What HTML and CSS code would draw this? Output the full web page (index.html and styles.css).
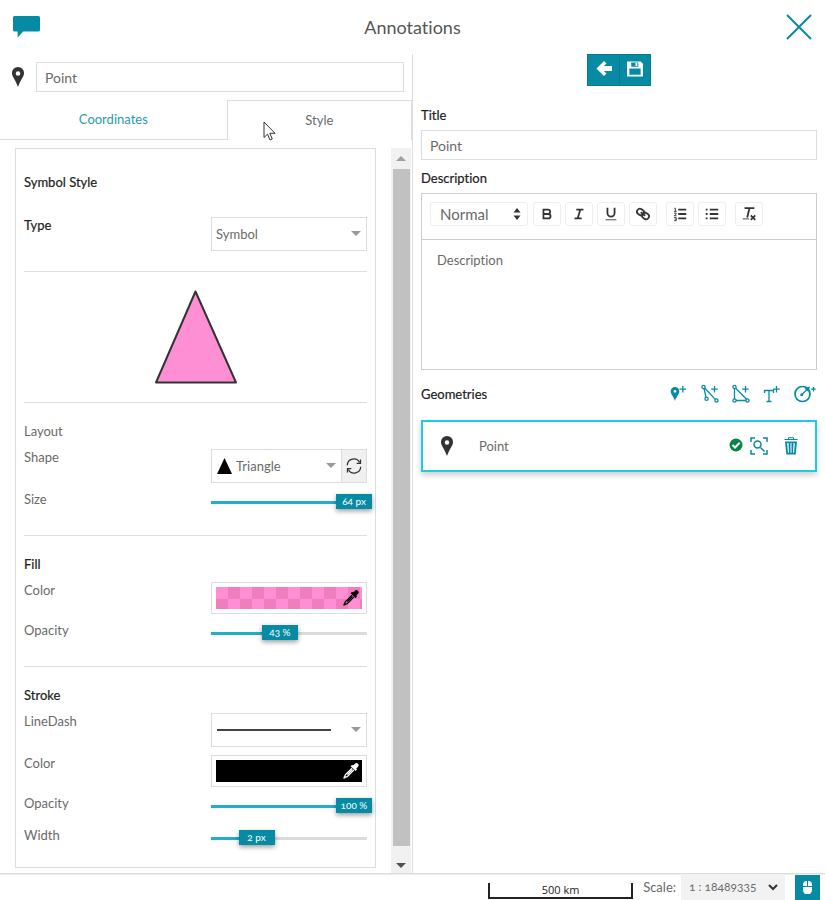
FILE: index.html
```html
<!DOCTYPE html>
<html lang="en">
<head>
<meta charset="utf-8">
<meta name="viewport" content="width=device-width, initial-scale=1">
<title>Annotations</title>
<link rel="stylesheet" href="styles.css">
</head>
<body>
<svg class="defs" aria-hidden="true">
  <symbol id="pin" viewBox="0 0 12 20"><path fill-rule="evenodd" d="M6 0a6 6 0 0 0-6 6.200c0 3.400 3.700 7 6 13.800 2.300-6.800 6-10.400 6-13.800A6 6 0 0 0 6 0zm0 4.200a2.300 2.300 0 1 1 0 4.600 2.300 2.300 0 0 1 0-4.600z"/></symbol>
  <symbol id="dropper" viewBox="0 0 16 16"><path d="M10 2.500 11.800 .900a2.100 2.100 0 0 1 3.200 2.900L13.300 5.600l.7.900-1.500 1.500L7.600 3.300 9.200 1.700z"/><path fill="none" stroke="currentColor" stroke-width="1.300" d="M9 5.200 2.300 11.800 1.400 14.500 4.200 13.600 10.800 7"/><path d="M.7 13.400 2.600 15.300 .6 15.600zM9.900 6.800 4.800 11.900 3.900 11 9 5.900z"/></symbol>
</svg>
<header class="topbar">
  <svg class="comment" viewBox="0 0 27 22" aria-hidden="true"><path d="M1.500 0h24A1.500 1.500 0 0 1 27 1.500v12.400a1.500 1.500 0 0 1-1.500 1.500H10.200L4.600 21.600V15.400H1.500A1.500 1.500 0 0 1 0 13.900V1.500A1.500 1.500 0 0 1 1.500 0z"/></svg>
  <h1>Annotations</h1>
  <button class="close" aria-label="Close"><svg viewBox="0 0 26 26"><path d="M1 1 25 25M25 1 1 25"/></svg></button>
</header>
<main class="panels">
  <section class="left">
    <div class="namebar">
      <svg class="pin"><use href="#pin"/></svg>
      <input class="text" type="text" value="Point" aria-label="Geometry name">
    </div>
    <nav class="tabs">
      <a href="#coordinates">Coordinates</a>
      <a href="#style" class="active">Style</a>
    </nav>
    <svg class="pointer" viewBox="0 0 13 20" aria-hidden="true"><path d="M1 1v15.500l3.500-3.400 2.500 5.900 2.300-1-2.500-5.700H12z"/></svg>
    <div class="scroller">
      <form class="card">
        <section class="group first">
          <h2>Symbol Style</h2>
          <div class="row">
            <label class="strong" for="type">Type</label>
            <div class="pick"><select id="type"><option>Symbol</option></select></div>
          </div>
        </section>
        <div class="preview">
          <svg viewBox="0 0 82 94" aria-hidden="true"><path d="M40.500 1.500 81 92.500H1z"/></svg>
        </div>
        <section class="group">
          <h3 class="plain">Layout</h3>
          <div class="row">
            <label for="shape">Shape</label>
            <div class="combo">
              <div class="pick shape"><svg viewBox="0 0 15 16" aria-hidden="true"><path d="M7.500 0 15 16H0z"/></svg><select id="shape"><option>Triangle</option></select></div>
              <button type="button" class="refresh" aria-label="Refresh symbols"><svg viewBox="0 0 16 16"><path d="M1.300 7.200A6.500 6.500 0 0 1 13.600 4.500M14.700 8.800A6.500 6.500 0 0 1 2.400 11.500"/><path d="M14.500 1.500V5.300H10.700M1.500 14.500V10.700H5.300"/></svg></button>
            </div>
          </div>
          <div class="row">
            <label for="size">Size</label>
            <div class="slider" style="--p:1"><input id="size" type="range" min="0" max="64" value="64"><output for="size">64 px</output></div>
          </div>
        </section>
        <section class="group">
          <h3>Fill</h3>
          <div class="row">
            <label for="fill">Color</label>
            <button type="button" id="fill" class="color"><span class="swatch pink"><svg><use href="#dropper"/></svg></span></button>
          </div>
          <div class="row">
            <label for="fo">Opacity</label>
            <div class="slider" style="--p:.43"><input id="fo" type="range" value="43"><output for="fo">43 %</output></div>
          </div>
        </section>
        <section class="group">
          <h3>Stroke</h3>
          <div class="row">
            <label for="dash">LineDash</label>
            <button type="button" id="dash" class="pick dash" aria-haspopup="listbox"><span></span></button>
          </div>
          <div class="row">
            <label for="stroke">Color</label>
            <button type="button" id="stroke" class="color"><span class="swatch black"><svg><use href="#dropper"/></svg></span></button>
          </div>
          <div class="row">
            <label for="so">Opacity</label>
            <div class="slider" style="--p:1"><input id="so" type="range" value="100"><output for="so">100 %</output></div>
          </div>
          <div class="row">
            <label for="width">Width</label>
            <div class="slider" style="--p:.25"><input id="width" type="range" min="0" max="8" value="2"><output for="width">2 px</output></div>
          </div>
        </section>
      </form>
      <div class="scrollbar" aria-hidden="true"><i class="up"></i><i class="thumb"></i><i class="down"></i></div>
    </div>
  </section>
  <section class="right">
    <div class="actions">
      <button aria-label="Back"><svg viewBox="0 0 16 16"><path d="M8 0 .5 7.500 8 15l2.500-2.500-2.600-2.600H16V5.100H7.900l2.600-2.600z"/></svg></button>
      <button aria-label="Save"><svg viewBox="0 0 17 16"><path fill-rule="evenodd" d="M0 0h14.500L17 2.500V16H0zM4.500 1v4.500h7.500V1zM2.500 7.500V14h12V7.500z"/><path d="M9 1.500h2v3.300H9z"/></svg></button>
    </div>
    <label class="strong" for="title">Title</label>
    <input class="text" id="title" type="text" value="Point">
    <label class="strong" for="desc">Description</label>
    <div class="editor">
      <div class="tools">
        <div class="format"><select aria-label="Text format"><option>Normal</option></select><svg viewBox="0 0 8 12" aria-hidden="true"><path d="M4 0 7.500 4.500H.5zM4 12 .5 7.500h7z"/></svg></div>
        <button aria-label="Bold"><svg viewBox="0 0 18 18"><path d="M5 4h5a2.500 2.500 0 0 1 0 5H5zM5 9h5.500a2.500 2.500 0 0 1 0 5H5z"/></svg></button>
        <button aria-label="Italic"><svg viewBox="0 0 18 18"><path d="M6 4h8M4 14h8M10.500 4 7.500 14"/></svg></button>
        <button aria-label="Underline"><svg viewBox="0 0 18 18"><path d="M5 2V8a4 4 0 0 0 8 0V2"/><path class="thin" d="M3 15.500h12"/></svg></button>
        <button aria-label="Link"><svg viewBox="0 0 18 18"><rect x="2" y="3.500" width="8" height="6.500" rx="3.200" transform="rotate(35 6 7)"/><rect x="8" y="8" width="8" height="6.500" rx="3.200" transform="rotate(35 12 11)"/><path d="M6.500 7 11.500 11"/></svg></button>
        <button class="gap" aria-label="Numbered list"><svg viewBox="0 0 18 18"><path d="M7 4h9M7 9h9M7 14h9"/><path class="thin" d="M2.500 2.500H3.800V6M2.300 6h3M2.300 8h2.400v1L2.500 11h2.700M2.300 13h2.500v3.500H2.300M3 14.700h1.800"/></svg></button>
        <button aria-label="Bulleted list"><svg viewBox="0 0 18 18"><path d="M6.500 4H16M6.500 9H16M6.500 14H16M2 4H4M2 9H4M2 14H4"/></svg></button>
        <button class="gap" aria-label="Clear formatting"><svg viewBox="0 0 18 18"><path d="M4 2.500h11M9.500 2.500 7 13M11 10.500l5 5M16 10.500l-5 5"/><path class="thin" d="M2 14.500h7"/></svg></button>
      </div>
      <textarea id="desc" placeholder="Description"></textarea>
    </div>
    <div class="geohead">
      <h2>Geometries</h2>
      <div class="adders">
        <button aria-label="Add point"><svg viewBox="0 0 20 20"><path class="solid" fill-rule="evenodd" d="M6 3a4.300 4.300 0 0 0-4.300 4.500C1.700 10.300 4.600 12.300 6 17c1.400-4.700 4.300-6.700 4.300-9.500A4.300 4.300 0 0 0 6 3zm0 2.900a1.400 1.400 0 1 1 0 2.800 1.400 1.400 0 0 1 0-2.800z"/><path d="M13.800 2v6.500M10.500 5.200h6.500"/></svg></button>
        <button aria-label="Add line"><svg viewBox="0 0 20 20"><path d="M4 4.500 6 13.300M4.900 4.300 15.500 15.600M14.500 2v6.500M11.200 5.200h6.500"/><circle cx="3.500" cy="3" r="1.600"/><circle cx="6.500" cy="14.800" r="1.600"/><circle cx="16.500" cy="16.500" r="1.600"/></svg></button>
        <button aria-label="Add polygon"><svg viewBox="0 0 20 20"><path d="M3.500 5v10M5 16.500h10M4.700 4.300 15.500 15.300M14.500 2v6.500M11.200 5.200h6.500"/><circle cx="3.500" cy="3" r="1.600"/><circle cx="3.500" cy="16.500" r="1.600"/><circle cx="16.500" cy="16.500" r="1.600"/></svg></button>
        <button aria-label="Add text"><svg viewBox="0 0 20 20"><path d="M2.500 9V6.500h9V9M7 6.500v11M4.500 17.500h5M14.500 2v6.500M11.200 5.200h6.500"/></svg></button>
        <button class="wide" aria-label="Add circle"><svg viewBox="0 0 24 20"><circle cx="9.500" cy="10" r="7.500" stroke-width="1.700"/><path d="M8.500 11 14.500 5M20.500 3v4.500M18.200 5.200h4.500"/><path class="solid" d="M17 2.500 15.300 8 11.500 4.200z"/><circle class="solid" cx="8.700" cy="10.800" r="1.500"/></svg></button>
      </div>
    </div>
    <article class="item">
      <svg class="pin"><use href="#pin"/></svg>
      <span>Point</span>
      <svg class="ok" viewBox="0 0 14 14" role="img" aria-label="Valid"><circle cx="7" cy="7" r="6.500"/><path d="M3.500 7 6 9.500 10.700 4.800"/></svg>
      <button class="zoom" aria-label="Zoom to geometry"><svg viewBox="0 0 18 18"><path d="M1 5V1H5M13 1h4V5M17 13v4H13M5 17H1V13M10.500 10.500 14.500 14.500"/><circle cx="7.500" cy="7.500" r="3.500"/></svg></button>
      <button class="trash" aria-label="Delete geometry"><svg viewBox="0 0 14 18"><path d="M4.500 2V.700h5V2M.5 2.500h13"/><path class="solid" fill-rule="evenodd" d="M1 4.500h12L11.700 17.500H2.300zM3.200 6l.7 9.800h1L4.500 6zM6.500 6v9.800h1V6zM9.500 6l-.4 9.800h1L10.800 6z"/></svg></button>
    </article>
  </section>
</main>
<footer class="status">
  <div class="scalebar">500 km</div>
  <label for="scale">Scale:</label>
  <div class="scale"><select id="scale"><option>1 : 18489335</option></select><svg viewBox="0 0 10 7" aria-hidden="true"><path d="M1 1 5 5 9 1"/></svg></div>
  <button aria-label="Mouse coordinates"><svg viewBox="0 0 9 13"><path d="M4 0v5H0V3.500A3.500 3.500 0 0 1 4 0zM5 0a3.500 3.500 0 0 1 4 3.500V5H5zM0 6h9v3a4 4 0 0 1-9 0z"/></svg></button>
</footer>
</body>
</html>
```
FILE: styles.css
```css
:root {
  --teal: #078aa3;
  --line: #dddddd;
  --ink: #333333;
  --text: #6a6a6a;
}
* { box-sizing: border-box; }
body {
  margin: 0;
  min-height: 100vh;
  display: flex;
  flex-direction: column;
  font: 13px/16px Lato, "Liberation Sans", sans-serif;
  font-variant-ligatures: none;
  color: var(--text);
  background: #fff;
}
h1, h2, h3 { margin: 0; font-weight: 400; }
button, input, select, textarea { font: inherit; color: inherit; margin: 0; border-radius: 0; }
button { padding: 0; border: 0; background: none; cursor: pointer; }
select { appearance: none; border: 0; background: none; outline: 0; }
svg { display: block; flex: none; }
.defs { display: none; }

.topbar {
  height: 54px;
  padding: 0 13px;
  display: grid;
  grid-template-columns: 1fr auto 1fr;
  align-items: center;
}
.topbar h1 { font-size: 18px; line-height: 24px; color: #555; }
.comment { width: 27px; height: 22px; fill: var(--teal); }
.close { justify-self: end; }
.close svg { width: 26px; height: 26px; fill: none; stroke: var(--teal); stroke-width: 2; }

.panels { flex: 1; display: grid; grid-template-columns: 412fr 413fr; border-bottom: 1px solid var(--line); box-shadow: 0 1px 1px #eee; }
.left { position: relative; display: flex; flex-direction: column; }
.right { border-left: 1px solid var(--line); padding: 0 8px; display: flex; flex-direction: column; }

.text { width: 100%; height: 30px; padding: 0 8px; border: 1px solid var(--line); font-size: 14px; background: #fff; }
.namebar { display: flex; align-items: center; gap: 12px; padding: 8px 8px 8px 12px; }
.pin { width: 12px; height: 20px; fill: var(--ink); }
.tabs { display: grid; grid-template-columns: 11fr 9fr; height: 40px; }
.tabs a { border-bottom: 1px solid var(--line); color: #259bb0; text-decoration: none; text-align: center; line-height: 38px; }
.tabs .active { border: 1px solid var(--line); border-bottom: 0; color: var(--text); }
.pointer { position: absolute; left: 263px; top: 67px; width: 13px; height: 20px; fill: #fff; stroke: #333; }

.scroller { flex: 1; display: flex; justify-content: space-between; padding: 8px 1px 0 15px; }
.card { flex: 1; margin: 0 15px 5px 0; padding: 0 8px; border: 1px solid var(--line); }
.group { display: flex; flex-direction: column; gap: 8px; padding: 20px 0; }
.group + .group, .preview, .preview + .group { border-top: 1px solid var(--line); }
.group:last-child { padding-bottom: 16px; }
h2, h3, .strong { color: #222; font-size: 13px; -webkit-text-stroke: 0.2px; }
.group h3 { margin-bottom: 2px; }
.group h3.plain { color: var(--text); -webkit-text-stroke: 0; }
.group.first { padding-top: 25px; gap: 27px; }
.row { display: grid; grid-template-columns: 6fr 5fr; align-items: start; }
.preview { height: 131px; display: grid; place-items: center; }
.preview svg { width: 82px; height: 94px; fill: #ff8fd4; stroke: #333; stroke-width: 2; stroke-linejoin: round; }

.pick { position: relative; height: 34px; border: 1px solid var(--line); background: #fff; }
.pick::after {
  content: "";
  position: absolute;
  right: 5px;
  top: 13px;
  border: 5px solid transparent;
  border-top-color: #999;
  border-bottom: 0;
  pointer-events: none;
}
.pick select { width: 100%; height: 32px; padding: 0 4px; }
.combo { display: flex; }
.shape { flex: 1; display: flex; align-items: center; padding-left: 5px; }
.shape svg { width: 15px; height: 16px; }
.shape select { min-width: 0; }
.refresh { width: 25px; height: 34px; display: grid; place-items: center; border: 1px solid var(--line); border-left: 0; background: #f0f0f0; }
.refresh svg { width: 16px; height: 16px; fill: none; stroke: #333; stroke-width: 1.3; }
.dash { display: flex; align-items: center; padding: 0 35px 0 5px; }
.dash span { flex: 1; height: 2px; background: #444; }
.color { height: 32px; padding: 4px; border: 1px solid var(--line); }
.swatch { display: flex; align-items: center; justify-content: flex-end; height: 22px; padding-right: 3px; }
.swatch svg { width: 16px; height: 16px; fill: currentColor; }
.pink { color: #000; background: repeating-conic-gradient(#f07dbd 0 25%, #ff8fd4 0 50%) 0 0 / 24px 24px; }
.black { color: #fff; background: #000; }

.slider { position: relative; height: 24px; margin: 0 -5px; }
.slider::before {
  content: "";
  position: absolute;
  inset: 10px 5px 11px;
  background: linear-gradient(#1eb0c8, #1eb0c8) 0 0 / calc(var(--p) * 100%) 100% no-repeat #dcdcdc;
}
.slider input { position: relative; display: block; appearance: none; width: 100%; height: 24px; background: none; }
.slider input::-webkit-slider-thumb { appearance: none; width: 36px; height: 15px; margin-top: -3px; background: var(--teal); box-shadow: 0 2px 5px rgba(0, 0, 0, .4); }
.slider output {
  position: absolute;
  top: 3px;
  left: calc(var(--p) * (100% - 36px));
  width: 36px;
  text-align: center;
  font-size: 10px;
  font-variant-numeric: oldstyle-nums;
  line-height: 15px;
  color: #fff;
  pointer-events: none;
}

.scrollbar { width: 20px; background: #f1f1f1; display: flex; flex-direction: column; align-items: center; }
.scrollbar .thumb { flex: 1; width: 17px; background: #c1c1c1; }
.up, .down { border: 5px solid transparent; }
.up { border-top: 0; border-bottom-color: #a0a0a0; margin: 8px 0; }
.down { border-bottom: 0; border-top-color: #505050; margin: 17px 0 5px; }

.actions { align-self: center; display: flex; margin-bottom: 21px; border: 1px solid #087b90; }
.actions button { width: 31px; height: 30px; padding-bottom: 2px; display: grid; place-items: center; background: var(--teal); }
.actions button + button { border-left: 1px solid #087b90; }
.actions svg { width: 16px; height: 16px; fill: #fff; }
.right > .strong { margin-bottom: 7px; }
.right > .text { margin-bottom: 10px; }
.editor { border: 1px solid #ccc; margin-bottom: 14px; display: flex; flex-direction: column; }
.tools { display: flex; gap: 4px; padding: 8px; height: 46px; border-bottom: 1px solid #ccc; }
.tools button, .format { height: 24px; border: 1px solid #eee; border-radius: 3px; }
.tools button { width: 28px; display: grid; place-items: center; }
.tools .gap { margin-left: 5px; }
.tools button svg { width: 16px; height: 16px; fill: none; stroke: var(--ink); stroke-width: 2; }
.tools .thin { stroke-width: 1; }
.format { width: 98px; display: flex; align-items: center; padding: 0 6px 0 9px; margin-right: 1px; }
.format select { flex: 1; min-width: 0; padding: 0; font-size: 15px; line-height: 20px; }
.format svg { width: 8px; height: 12px; fill: var(--ink); }
.editor textarea { height: 129px; padding: 12px 15px; border: 0; resize: none; background: none; outline: 0; }
textarea::placeholder { color: var(--text); }

.geohead { display: flex; justify-content: space-between; align-items: center; height: 20px; margin-bottom: 16px; }
.adders { display: flex; gap: 11px; }
.adders svg { width: 20px; height: 20px; fill: none; stroke: var(--teal); stroke-width: 1.3; }
.adders .wide svg { width: 24px; }
.adders .solid, .trash .solid { fill: var(--teal); stroke: none; }
.item { display: flex; align-items: center; height: 52px; padding: 0 17px 0 18px; border: 2px solid #1fcbe0; box-shadow: 0 3px 6px rgba(0, 0, 0, .2); }
.item span { flex: 1; margin-left: 26px; }
.ok { width: 14px; height: 14px; margin-bottom: 3px; fill: #078446; }
.ok path { fill: none; stroke: #fff; stroke-width: 2; }
.zoom { margin-left: 7px; }
.zoom svg { width: 18px; height: 18px; fill: none; stroke: var(--teal); stroke-width: 1.5; }
.trash { margin-left: 16px; }
.trash svg { width: 14px; height: 18px; fill: none; stroke: var(--teal); }

.status { display: flex; justify-content: flex-end; align-items: center; height: 26px; padding-right: 5px; }
.scalebar { align-self: flex-end; width: 145px; height: 16px; margin: 0 10px 1px 0; border: 2px solid #222; border-top: 0; text-align: center; font: 11px/14px "Open Sans", sans-serif; color: #222; }
.scale { display: flex; align-items: center; width: 104px; height: 26px; margin: 0 10px 0 5px; padding: 0 7px 0 8px; background: #f2f2f2; }
.scale select { flex: 1; min-width: 0; padding: 0; font-size: 12px; font-variant-numeric: oldstyle-nums; }
.scale svg { width: 10px; height: 7px; fill: none; stroke: var(--ink); stroke-width: 2; }
.status button { width: 25px; height: 25px; display: grid; place-items: center; background: var(--teal); }
.status button svg { width: 9px; height: 13px; fill: #fff; }
```
